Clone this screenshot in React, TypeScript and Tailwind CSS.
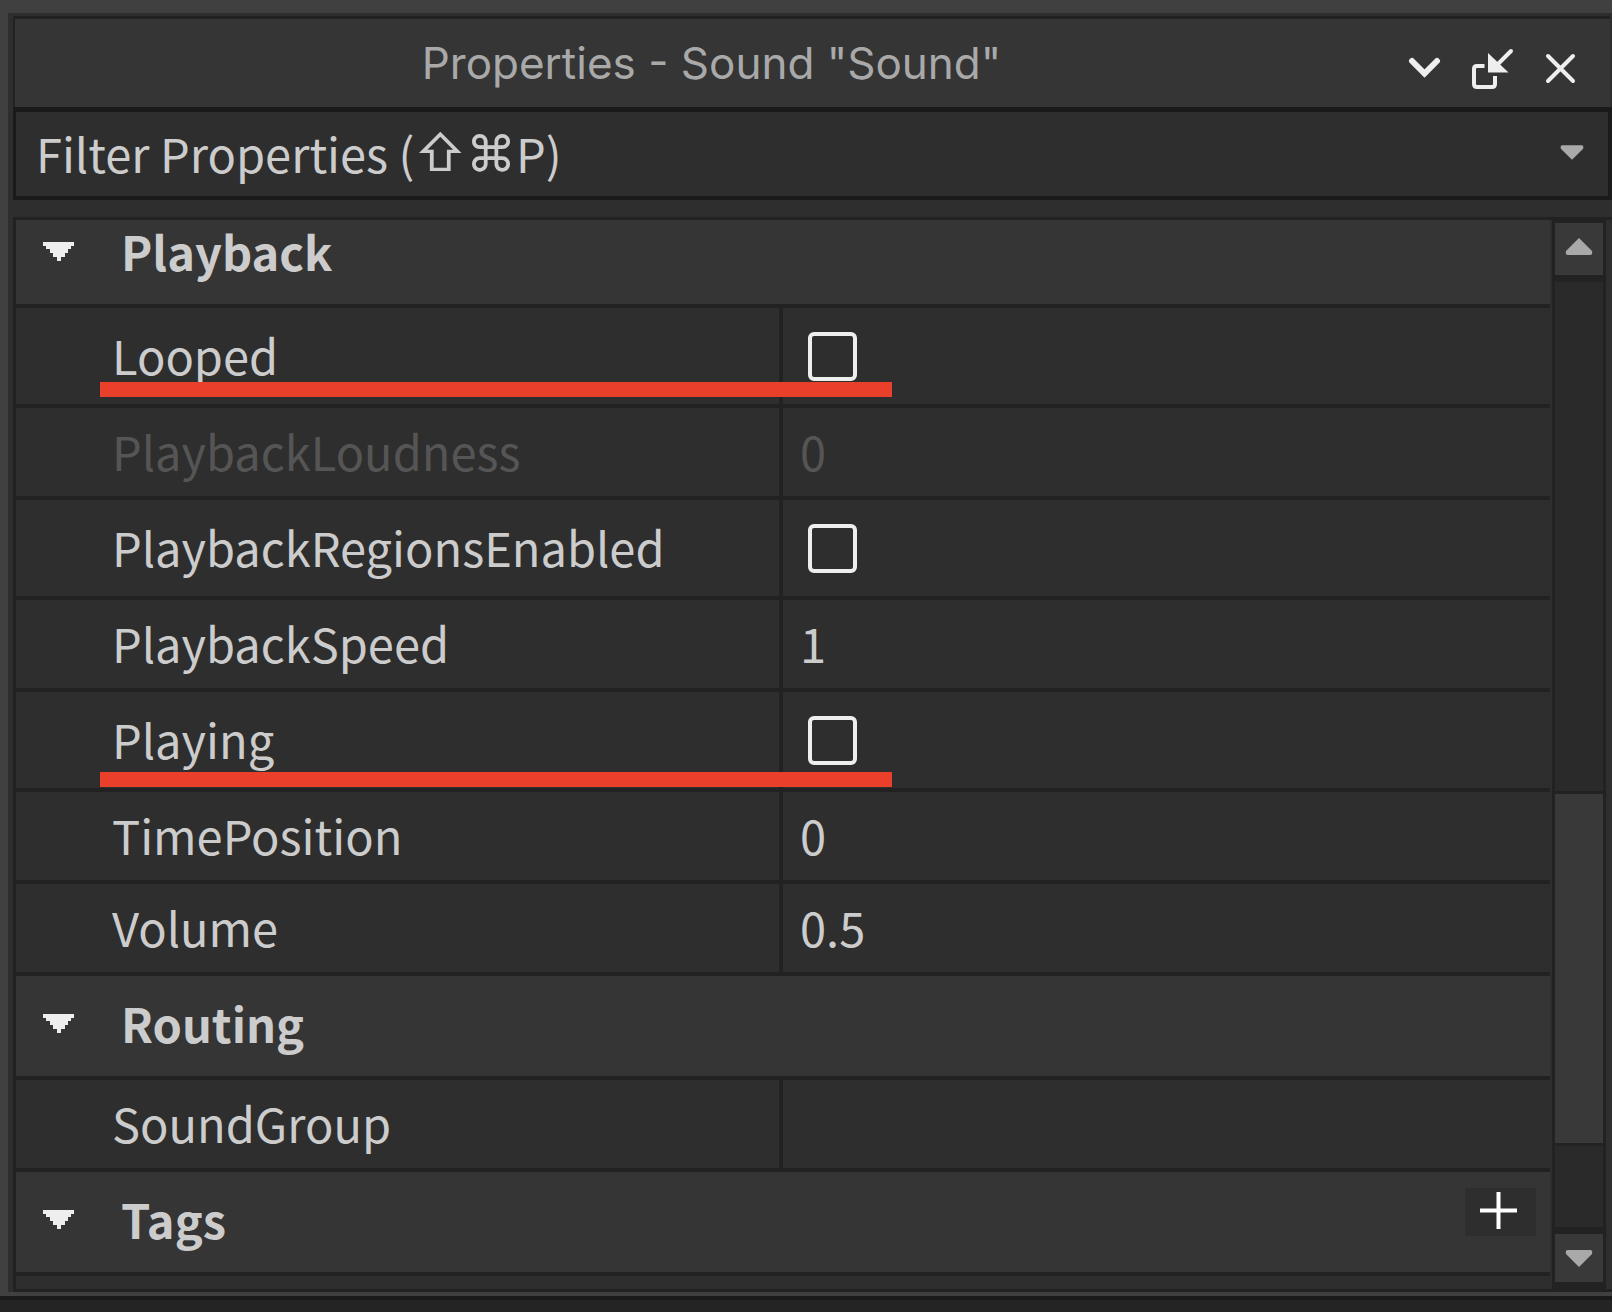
import React, { useState } from 'react';

interface Property {
  name: string;
  value: string | boolean;
  readOnly?: boolean;
  marker?: string;
}

interface Section {
  title: string;
  canAdd?: boolean;
  properties: Property[];
}

const sections: Section[] = [
  {
    title: 'Playback',
    properties: [
      { name: 'Looped', value: false, marker: 'top-[74px]' },
      { name: 'PlaybackLoudness', value: '0', readOnly: true },
      { name: 'PlaybackRegionsEnabled', value: false },
      { name: 'PlaybackSpeed', value: '1' },
      { name: 'Playing', value: false, marker: 'top-[80px]' },
      { name: 'TimePosition', value: '0' },
      { name: 'Volume', value: '0.5' },
    ],
  },
  { title: 'Routing', properties: [{ name: 'SoundGroup', value: '' }] },
  { title: 'Tags', canAdd: true, properties: [] },
];

const Triangle: React.FC<{ className: string; up?: boolean }> = ({ className, up }) => (
  <svg viewBox="0 0 28 17" className={className} fill="currentColor" aria-hidden="true">
    {up ? (
      <path d="M14 0 L17 3 L27 13 Q28 17 25 17 L3 17 Q0 17 1 13 L11 3 Z" />
    ) : (
      <path d="M14 17 L17 14 L27 4 Q28 0 25 0 L3 0 Q0 0 1 4 L11 14 Z" />
    )}
  </svg>
);

const TitleBar: React.FC = () => (
  <header className="mr-[2px] flex h-[91px] items-center border-t-[3px] border-l-2 border-[#222222] bg-[#353535]">
    <h1 className="flex-1 text-center font-['Inter',sans-serif] text-[44px] leading-[56px] text-[#a9a9a9]">
      Properties - Sound "Sound"
    </h1>
    <div className="flex items-center gap-7 pt-3 pr-8 text-[#eeeeee]">
      <button type="button" aria-label="Options">
        <svg viewBox="0 0 36 42" className="h-[42px] w-9" fill="none" stroke="currentColor" strokeWidth="6" strokeLinecap="round">
          <path d="M4 13 L16.500 25.500 L29 13" />
        </svg>
      </button>
      <button type="button" aria-label="Dock">
        <svg viewBox="0 0 42 42" className="h-[42px] w-[42px]" fill="none" stroke="currentColor" strokeWidth="4">
          <path d="M12.500 18 H5 Q2 18 2 21 V36 Q2 39 5 39 H20 Q23 39 23 36 V28" />
          <path d="M26 16 L39 3" strokeLinecap="round" />
          <path d="M16 5 V24.500 H36.500 Z" fill="currentColor" stroke="none" />
        </svg>
      </button>
      <button type="button" aria-label="Close">
        <svg viewBox="0 0 36 42" className="h-[42px] w-9" fill="none" stroke="currentColor" strokeWidth="4" strokeLinecap="round">
          <path d="M6 8 L31 33 M31 8 L6 33" />
        </svg>
      </button>
    </div>
  </header>
);

const FilterBox: React.FC = () => {
  const [filter, setFilter] = useState('');

  return (
    <div className="relative flex h-[93px] items-center border-4 border-t-[5px] border-l-[3px] border-[#1a1a1a] bg-[#2e2e2e] pr-6">
      <input
        id="filter"
        type="text"
        value={filter}
        onChange={(e) => setFilter(e.target.value)}
        className="h-full min-w-0 flex-1 bg-transparent pb-[2px] pl-5 text-[#cccccc] outline-none"
      />
      {/* hint with the shortcut keys, hidden while typing */}
      <label
        htmlFor="filter"
        className={`absolute inset-y-0 left-5 flex items-center pb-[2px] whitespace-pre text-[#cccccc] ${filter ? 'invisible' : ''}`}
      >
        Filter Properties (
        <span className="font-['Inter','DejaVu_Sans',sans-serif] text-[50px]">⇧⌘</span>
        P)
      </label>
      <button type="button" aria-label="Filter history" className="pb-1 text-[#a9a9a9]">
        <Triangle className="h-[15px] w-6" />
      </button>
    </div>
  );
};

const PropertyRow: React.FC<{ property: Property }> = ({ property }) => {
  const [checked, setChecked] = useState(property.value === true);
  const isCheckbox = typeof property.value === 'boolean';
  const id = `prop-${property.name}`;
  const color = property.readOnly ? 'text-[#555555]' : 'text-[#cccccc]';

  return (
    <tr className={`relative ${isCheckbox ? 'h-[100px]' : 'h-[92px]'} ${color}`}>
      <th scope="row" className="border-r-4 border-b-4 border-[#222222] pb-[2px] pl-24 text-left font-normal">
        <label htmlFor={id}>{property.name}</label>
        {/* highlight marker over the row */}
        {property.marker && (
          <span className={`absolute right-[42.9%] left-[84px] h-[15px] bg-[#ea3f2b] ${property.marker}`} />
        )}
      </th>
      <td className="border-b-4 border-[#222222]">
        {isCheckbox ? (
          <input
            id={id}
            type="checkbox"
            checked={checked}
            onChange={(e) => setChecked(e.target.checked)}
            className="ml-[25px] block h-[49px] w-[49px] appearance-none rounded-md border-4 border-[#eeeeee] checked:bg-[#eeeeee]"
          />
        ) : (
          <input
            id={id}
            type="text"
            defaultValue={property.value as string}
            readOnly={property.readOnly}
            className="block h-16 w-full bg-transparent pb-[2px] pl-[17px] outline-none"
          />
        )}
      </td>
    </tr>
  );
};

const SectionRows: React.FC<{ section: Section; first: boolean }> = ({ section, first }) => {
  const [open, setOpen] = useState(true);

  return (
    <tbody>
      {/* the first heading is partly scrolled out of view */}
      <tr className={first ? 'h-[88px]' : 'h-[104px]'}>
        <th
          colSpan={2}
          scope="colgroup"
          className={`border-b-4 border-[#222222] bg-[#353535] pl-[27px] text-left ${first ? 'pb-[22px]' : 'pb-[6px]'}`}
        >
          <div className="flex h-14 items-center">
            <button
              type="button"
              aria-expanded={open}
              onClick={() => setOpen(!open)}
              className="flex flex-1 items-center gap-[47px] text-left font-bold text-[#cccccc]"
            >
              <svg viewBox="0 0 31 19" className="h-[19px] w-[31px]" fill="#eeeeee" aria-hidden="true">
                <path d="M0 0 H31 V4 H28 V7 H25 V11 H22 V15 H18 V19 H14 V15 H10 V11 H7 V7 H3 V4 H0 Z" />
              </svg>
              {section.title}
            </button>
            {section.canAdd && (
              <button
                type="button"
                aria-label="Add tag"
                className="mr-[14px] mb-[14px] flex h-12 w-[71px] items-center justify-center bg-[#2e2e2e] pr-1 pb-1 text-white"
              >
                <svg viewBox="0 0 37 37" className="h-[37px] w-[37px]" stroke="currentColor" strokeWidth="4">
                  <path d="M18.500 0 V37 M0 18.500 H37" />
                </svg>
              </button>
            )}
          </div>
        </th>
      </tr>
      {open && section.properties.map((p) => <PropertyRow key={p.name} property={p} />)}
    </tbody>
  );
};

const ScrollBar: React.FC = () => (
  <div className="ml-[2px] flex w-[54px] shrink-0 flex-col bg-[#222222] pt-[3px] pr-[3px] pb-[7px] pl-[3px] text-[#a9a9a9]">
    <button type="button" aria-label="Scroll up" className="flex h-[52px] items-center justify-center bg-[#393939] pb-[6px]">
      <Triangle up className="h-[17px] w-7" />
    </button>
    <div className="mt-[7px] grow-[509] bg-[#2a2a2a]" />
    <div className="my-[3px] grow-[349] bg-[#393939]" />
    <div className="mb-[7px] grow-[81] bg-[#2a2a2a]" />
    <button type="button" aria-label="Scroll down" className="flex h-12 items-center justify-center bg-[#393939]">
      <Triangle className="h-[17px] w-7" />
    </button>
  </div>
);

const App: React.FC = () => {
  return (
    <div className="bg-[#404040] pt-[13px] font-['Noto_Sans_CJK_SC',sans-serif] text-[47px] leading-[68px]">
      <div className="ml-2 bg-[#2e2e2e] pt-[3px] pl-[5px]">
        <TitleBar />
        <FilterBox />
        <main className="mt-[17px] flex border-t-[3px] border-b-[3px] border-l-[3px] border-[#222222] pr-[6px]">
          <div className="min-w-0 flex-1 pb-[13px]">
            <table className="w-full table-fixed border-separate border-spacing-0">
              {sections.map((section, i) => (
                <SectionRows key={section.title} section={section} first={i === 0} />
              ))}
            </table>
          </div>
          <ScrollBar />
        </main>
      </div>
      <footer className="mt-1 h-4 border-t-4 border-[#1a1a1a] bg-[#242424]" />
    </div>
  );
};

export default App;
